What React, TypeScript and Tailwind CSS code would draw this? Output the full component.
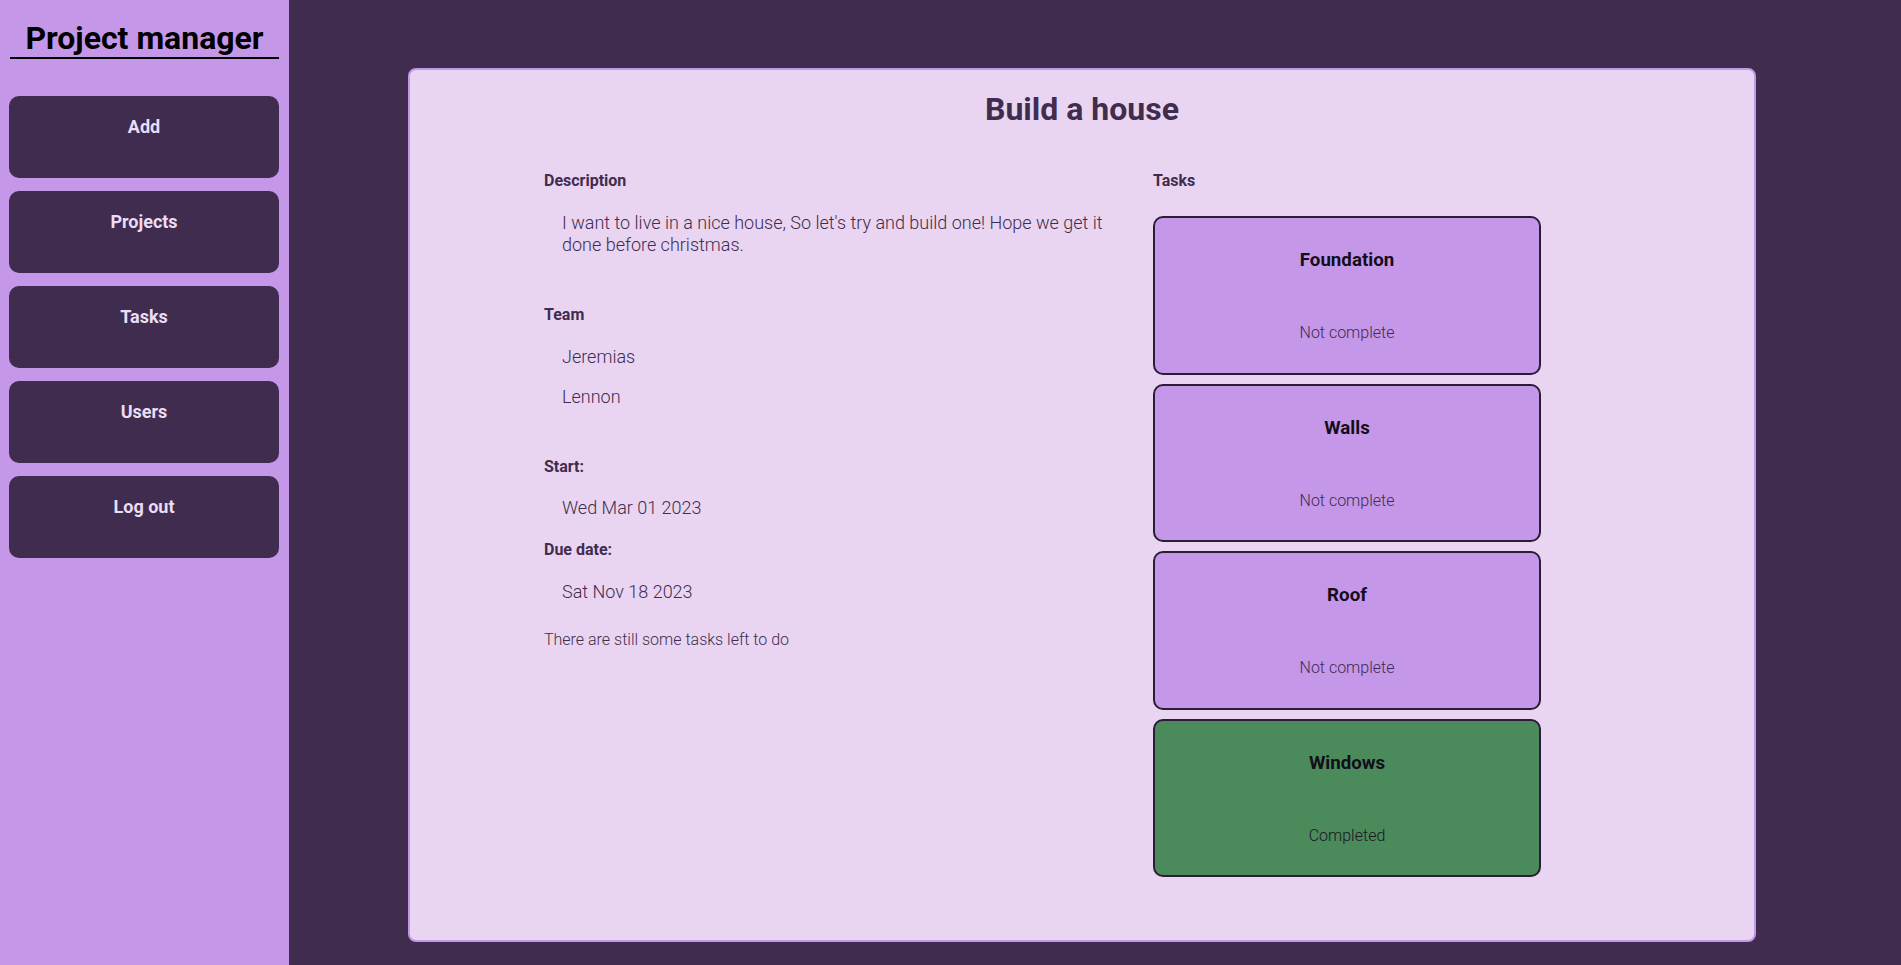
import React from 'react';

const navItems = ['Add', 'Projects', 'Tasks', 'Users', 'Log out'];

const tasks = [
  { title: 'Foundation', done: false },
  { title: 'Walls', done: false },
  { title: 'Roof', done: false },
  { title: 'Windows', done: true },
];

const Sidebar = () => (
  <aside className="w-[289px] shrink-0 bg-[#c497e9] pt-[20px]">
    <h1 className="mx-[10px] border-b-2 border-black text-center text-[32px] font-bold leading-[37px] text-black">
      Project manager
    </h1>
    <nav className="mt-[37px] flex flex-col gap-[13px] pl-[9px] pr-[10px]">
      {navItems.map((item) => (
        <button
          key={item}
          className="h-[82px] rounded-[10px] bg-[#3f2c4f] pt-[20px] text-center text-[18px] font-bold leading-[21px] text-[#ecdcf5] flex justify-center items-start"
        >
          {item}
        </button>
      ))}
    </nav>
  </aside>
);

const TaskCard = ({ title, done }: { title: string; done: boolean }) => (
  <div
    className={`flex h-[158.5px] flex-col items-center rounded-[10px] border-2 border-[#2a1d36] pt-[31px] ${
      done ? 'bg-[#4a8a5b]' : 'bg-[#c497e9]'
    }`}
  >
    <h3 className="text-[18.72px] font-bold leading-[22px] text-[#140d1a]">{title}</h3>
    <p
      className={`mt-[52px] text-[16px] font-light leading-[19px] ${
        done ? 'text-[#1c1620]' : 'text-[#3f2c4f]'
      }`}
    >
      {done ? 'Completed' : 'Not complete'}
    </p>
  </div>
);

export default function App() {
  return (
    <div className="flex h-[965px] w-full overflow-hidden bg-[#3f2c4f] font-['Roboto',sans-serif]">
      <Sidebar />
      <main className="flex-1 pt-[68px]">
        <div className="ml-[119px] h-[874px] w-[1348px] rounded-[8px] border-2 border-[#c497e9] bg-[#e9d5f1] pt-[21px]">
          <h2 className="text-center text-[32px] font-bold leading-[37px] text-[#3f2c4f]">Build a house</h2>
          <div className="mt-[43px] flex pl-[134px]">
            <section className="w-[609px] shrink-0 text-[#3f2c4f]">
              <h4 className="text-[16px] font-bold leading-[19px]">Description</h4>
              <p className="mt-[22px] w-[560px] pl-[18px] text-[18px] font-light leading-[22px]">
                I want to live in a nice house, So let's try and build one! Hope we get it done before christmas.
              </p>
              <h4 className="mt-[49px] text-[16px] font-bold leading-[19px]">Team</h4>
              <ul className="mt-[22px] flex flex-col gap-[19px] pl-[18px] text-[18px] font-light leading-[21px]">
                <li>Jeremias</li>
                <li>Lennon</li>
              </ul>
              <h4 className="mt-[50px] text-[16px] font-bold leading-[19px]">Start:</h4>
              <p className="mt-[21px] pl-[18px] text-[18px] font-light leading-[21px]">Wed Mar 01 2023</p>
              <h4 className="mt-[22px] text-[16px] font-bold leading-[19px]">Due date:</h4>
              <p className="mt-[22px] pl-[18px] text-[18px] font-light leading-[21px]">Sat Nov 18 2023</p>
              <p className="mt-[28px] text-[16px] font-light leading-[19px]">There are still some tasks left to do</p>
            </section>
            <section className="w-[388px] shrink-0">
              <h4 className="text-[16px] font-bold leading-[19px] text-[#3f2c4f]">Tasks</h4>
              <div className="mt-[26px] flex flex-col gap-[9px]">
                {tasks.map((t) => (
                  <TaskCard key={t.title} title={t.title} done={t.done} />
                ))}
              </div>
            </section>
          </div>
        </div>
      </main>
    </div>
  );
}
